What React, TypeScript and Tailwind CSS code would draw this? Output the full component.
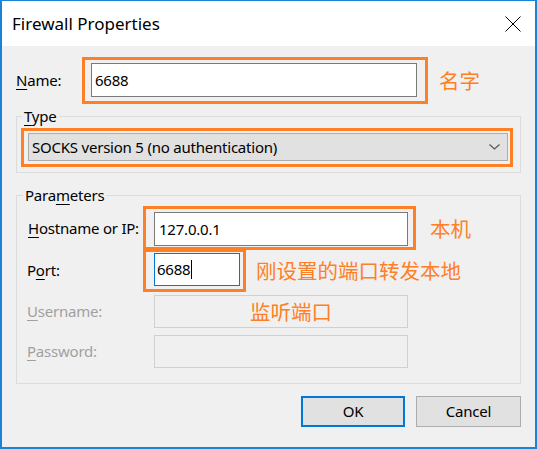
import React from "react";

const U = ({ children }: { children: React.ReactNode }) => (
  <span className="underline decoration-1 underline-offset-[3px]">{children}</span>
);

export default function App() {
  return (
    <div className="w-[537px] h-[449px] bg-[#f0f0f0] border-x-2 border-t border-b-2 border-[#1883d7] flex flex-col font-['Noto_Sans','Noto_Sans_CJK_SC',sans-serif] text-[15px] tracking-[-0.22px] text-black overflow-hidden">
      {/* Title bar */}
      <div className="h-[45px] shrink-0 bg-white flex items-center justify-between pl-[10px] pr-[14px]">
        <span className="text-[17px] tracking-normal leading-none">Firewall Properties</span>
        <svg width="16" height="16" viewBox="0 0 16 16" className="mt-[1px]">
          <path d="M0.5 0.5 L15.5 15.5 M15.5 0.5 L0.5 15.5" stroke="#000" strokeWidth="1" fill="none" />
        </svg>
      </div>

      {/* Name row */}
      <div className="mt-[11px] flex items-center">
        <div className="w-[80px] pl-[14px]">
          <U>N</U>ame:
        </div>
        <div className="border-[3px] border-[#ff7f27] pl-[6px] pr-[8px] pt-[3px] pb-[4px]">
          <div className="w-[326px] h-[34px] border border-[#7a7a7a] bg-white pl-[3px] flex items-center">6688</div>
        </div>
        <div className="ml-[11px] text-[20.5px] tracking-normal text-[#ff7f27] font-['Noto_Sans_CJK_SC',sans-serif]">名字</div>
      </div>

      {/* Type group */}
      <fieldset className="mt-[2px] ml-[14px] w-[505px] border border-[#dcdcdc] pb-[5px]">
        <legend className="ml-[5px] px-[2px] leading-[20px]">
          <U>T</U>ype
        </legend>
        <div className="mt-[2px] ml-[4px] w-[492px] border-[3px] border-[#ff7f27] pl-[4px] pr-[2px] pt-[2px] pb-[3px]">
          <div className="h-[28px] w-[480px] bg-[#e1e1e1] border border-[#adadad] flex items-center justify-between pl-[3px] pr-[7px]">
            <span>SOCKS version 5 (no authentication)</span>
            <svg width="11" height="6" viewBox="0 0 11 6">
              <path d="M0.5 0.5 L5.5 5 L10.5 0.5" stroke="#555" strokeWidth="1.2" fill="none" />
            </svg>
          </div>
        </div>
      </fieldset>

      {/* Parameters group */}
      <fieldset className="mt-[12px] ml-[14px] w-[505px] border border-[#dcdcdc] pb-[15px]">
        <legend className="ml-[6px] px-[2px] leading-[20px]">
          Para<U>m</U>eters
        </legend>

        <div className="mt-[1px] flex items-center">
          <div className="w-[126px] pl-[11px]">
            <U>H</U>ostname or IP:
          </div>
          <div className="border-[3px] border-[#ff7f27] pl-[8px] pr-[5px] pt-[3px] pb-[1px]">
            <div className="w-[254px] h-[34px] border border-[#7a7a7a] bg-white pl-[4px] flex items-center">127.0.0.1</div>
          </div>
          <div className="ml-[14px] text-[20.5px] tracking-normal text-[#ff7f27] font-['Noto_Sans_CJK_SC',sans-serif]">本机</div>
        </div>

        <div className="-mt-[1px] flex items-center">
          <div className="w-[126px] pl-[10px]">
            P<U>o</U>rt:
          </div>
          <div className="border-[3px] border-[#ff7f27] pl-[8px] pr-[3px] pt-[1px] pb-[3px]">
            <div className="w-[86px] h-[33px] border border-[#0078d7] bg-white pl-[2px] flex items-center">
              6688<span className="inline-block w-px h-[19px] bg-black ml-px" />
            </div>
          </div>
          <div className="ml-[10px] text-[20.5px] tracking-normal text-[#ff7f27] font-['Noto_Sans_CJK_SC',sans-serif]">刚设置的端口转发本地</div>
        </div>

        <div className="mt-[3px] flex items-center">
          <div className="w-[126px] pl-[10px] text-[#a0a0a0]">
            <U>U</U>sername:
          </div>
          <div className="ml-[11px] w-[254px] h-[33px] border border-[#d0d0d0] bg-[#f0f0f0] flex items-center pl-[95px]">
            <span className="text-[20.5px] tracking-normal text-[#ff7f27] font-['Noto_Sans_CJK_SC',sans-serif]">监听端口</span>
          </div>
        </div>

        <div className="mt-[7px] flex items-center">
          <div className="w-[126px] pl-[10px] text-[#a0a0a0]">
            <U>P</U>assword:
          </div>
          <div className="ml-[11px] w-[254px] h-[33px] border border-[#d0d0d0] bg-[#f0f0f0]" />
        </div>
      </fieldset>

      {/* Buttons */}
      <div className="mt-[12px] flex justify-end gap-[11px] pr-[14px]">
        <div className="w-[104px] h-[31px] border-2 border-[#0078d7] bg-[#e1e1e1] flex items-center justify-center">OK</div>
        <div className="w-[105px] h-[31px] border border-[#adadad] bg-[#e1e1e1] flex items-center justify-center">Cancel</div>
      </div>
    </div>
  );
}
